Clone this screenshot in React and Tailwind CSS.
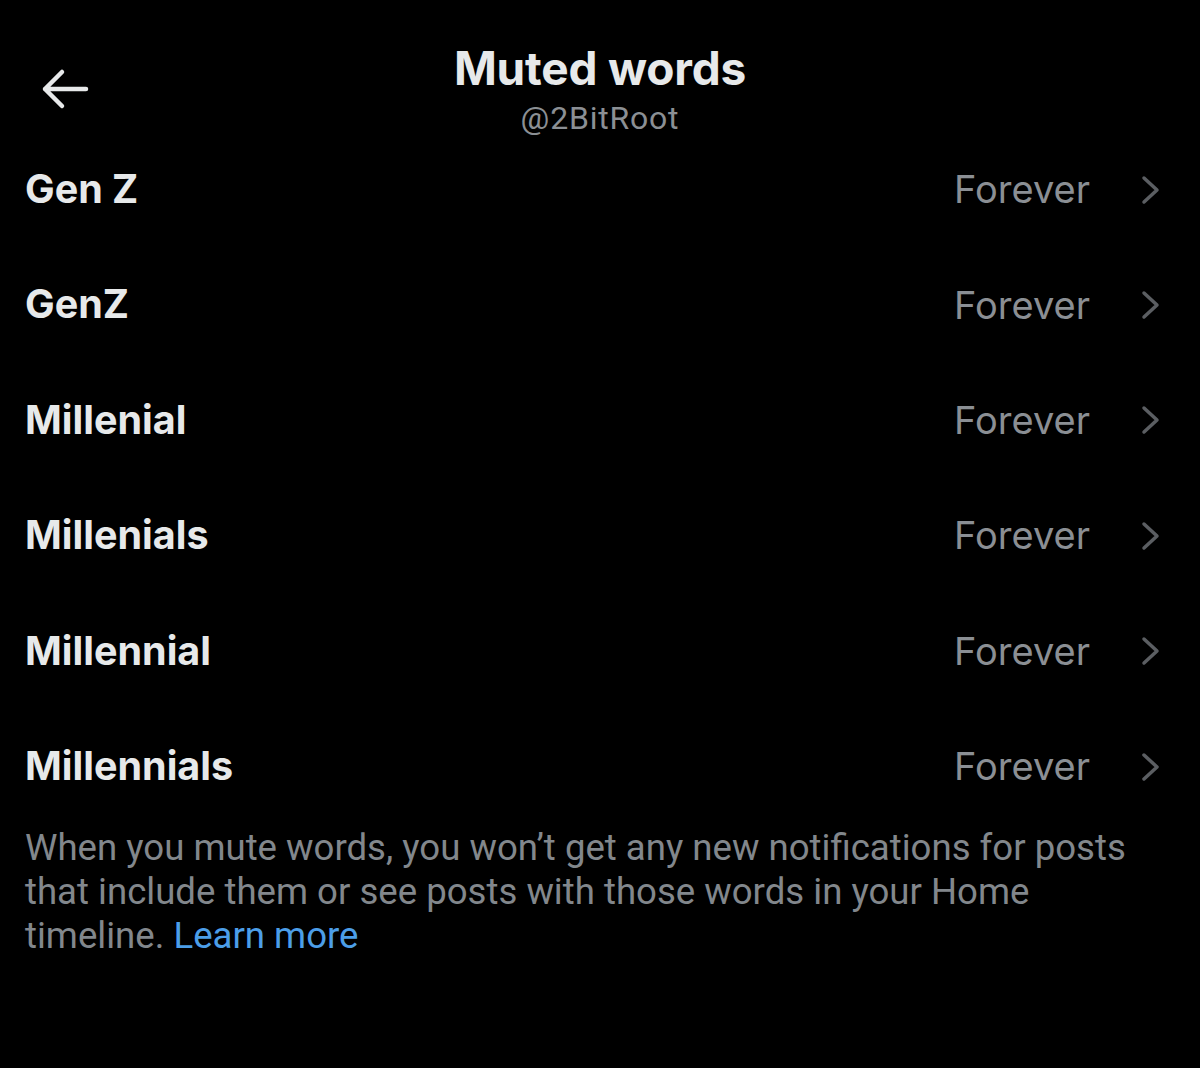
import React from "react";

const words = ["Gen Z", "GenZ", "Millenial", "Millenials", "Millennial", "Millennials"];

function Chevron() {
  return (
    <svg width="22" height="30" viewBox="0 0 22 30" fill="none" className="ml-[50px]">
      <path d="M4 3 L17 15 L4 27" stroke="#5b5e62" strokeWidth="3.5" strokeLinecap="round" strokeLinejoin="round" />
    </svg>
  );
}

export default function App() {
  return (
    <div className="w-[1200px] h-[1068px] bg-black text-[#e7e9ea] overflow-hidden" style={{ fontFamily: "Inter, 'Liberation Sans', sans-serif" }}>
      <div className="relative h-[150px]">
        <svg className="absolute left-[40px] top-[68px]" width="50" height="42" viewBox="0 0 50 42" fill="none">
          <path d="M46 21 H5 M22 4 L5 21 L22 38" stroke="#e7e9ea" strokeWidth="4.5" strokeLinecap="round" strokeLinejoin="round" />
        </svg>
        <div className="flex flex-col items-center pt-[40px]">
          <div className="text-[46px] leading-[56px] font-bold text-[#e7e9ea] tracking-[-0.2px]">Muted words</div>
          <div className="text-[32px] leading-[40px] text-[#8b8f94] mt-[2px] tracking-[0.8px]" style={{ fontFamily: "Roboto, sans-serif" }}>@2BitRoot</div>
        </div>
      </div>
      <div className="flex flex-col mt-[-18px]">
        {words.map((w) => (
          <div key={w} className="flex items-center h-[115.4px] pl-[25px] pr-[38px]">
            <div className="flex-1 text-[39.5px] font-bold text-[#e7e9ea]">{w}</div>
            <div className="text-[38px] text-[#8b8f94]">Forever</div>
            <Chevron />
          </div>
        ))}
      </div>
      <div className="px-[25px] mt-[2px] text-[36.6px] leading-[44px] text-[#82878c] whitespace-nowrap" style={{ fontFamily: "Roboto, sans-serif" }}>
        When you mute words, you won’t get any new notifications for posts
        <br />
        that include them or see posts with those words in your Home
        <br />
        timeline. <span className="text-[#4c9ee8]">Learn more</span>
      </div>
    </div>
  );
}
